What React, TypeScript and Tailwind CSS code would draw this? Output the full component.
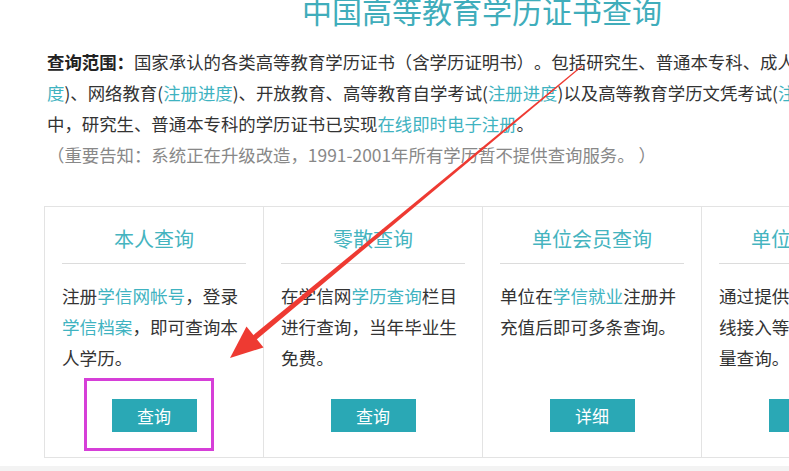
import React from "react";

type Piece = { t: string; link?: boolean };

interface CardProps {
  title: string;
  lines: Piece[][];
  button: string;
}

const cards: CardProps[] = [
  {
    title: "本人查询",
    lines: [
      [{ t: "注册" }, { t: "学信网帐号", link: true }, { t: "，登录" }],
      [{ t: "学信档案", link: true }, { t: "，即可查询本" }],
      [{ t: "人学历。" }],
    ],
    button: "查询",
  },
  {
    title: "零散查询",
    lines: [
      [{ t: "在学信网" }, { t: "学历查询", link: true }, { t: "栏目" }],
      [{ t: "进行查询，当年毕业生" }],
      [{ t: "免费。" }],
    ],
    button: "查询",
  },
  {
    title: "单位会员查询",
    lines: [
      [{ t: "单位在" }, { t: "学信就业", link: true }, { t: "注册并" }],
      [{ t: "充值后即可多条查询。" }],
    ],
    button: "详细",
  },
  {
    title: "单位批量查询",
    lines: [
      [{ t: "通过提供数据文件或在" }],
      [{ t: "线接入等方式进行批" }],
      [{ t: "量查询。" }],
    ],
    button: "详细",
  },
];

function Line({ parts }: { parts: Piece[] }) {
  return (
    <div className="whitespace-nowrap">
      {parts.map((p, i) =>
        p.link ? (
          <span key={i} className="text-[#3fb3c1]">
            {p.t}
          </span>
        ) : (
          <span key={i}>{p.t}</span>
        )
      )}
    </div>
  );
}

function QueryCard({ title, lines, button }: CardProps) {
  return (
    <div className="flex h-full w-[219px] shrink-0 flex-col border-r border-[#e3e3e3] px-[17px] pb-[25px]">
      <div className="mt-[18px] text-center text-[20px] leading-[28px] text-[#45b4bf]">
        {title}
      </div>
      <div className="mt-[10px] border-t border-[#dcdcdc]" />
      <div className="mt-[16px] text-[17.6px] leading-[31px] text-[#333]">
        {lines.map((l, i) => (
          <Line key={i} parts={l} />
        ))}
      </div>
      <div className="mt-auto flex justify-center">
        <button className="h-[33px] w-[85px] bg-[#2aa8b5] text-[17px] text-white">
          {button}
        </button>
      </div>
    </div>
  );
}

export default function App() {
  return (
    <div className="relative h-[471px] w-[789px] overflow-hidden bg-white font-['Noto_Sans_CJK_SC',sans-serif] [text-spacing-trim:space-all]">
      <div className="ml-[44px] w-[876px]">
        <h1 className="-mt-[5px] text-center text-[30px] leading-[30px] text-[#40adbb]">
          中国高等教育学历证书查询
        </h1>

        <div className="mt-[21px] ml-[3px] text-[17.4px] leading-[31px] text-[#333]">
          <div className="whitespace-nowrap">
            <span className="font-bold text-[#222]">查询范围：</span>
            国家承认的各类高等教育学历证书（含学历证明书）。包括研究生、普通本专科、成人本专科(
            <span className="text-[#3fb3c1]">注册进</span>
          </div>
          <div className="whitespace-nowrap">
            <span className="text-[#3fb3c1]">度</span>)、网络教育(
            <span className="text-[#3fb3c1]">注册进度</span>)、开放教育、高等教育自学考试(
            <span className="text-[#3fb3c1]">注册进度</span>)以及高等教育学历文凭考试(
            <span className="text-[#3fb3c1]">注册进度</span>)等。其
          </div>
          <div className="whitespace-nowrap">
            中，研究生、普通本专科的学历证书已实现
            <span className="text-[#3fb3c1]">在线即时电子注册</span>。
          </div>
          <div className="whitespace-nowrap text-[#888]">
            （重要告知：系统正在升级改造，1991-2001年所有学历暂不提供查询服务。 ）
          </div>
        </div>

        <div className="mt-[36px] flex h-[252px] border border-r-0 border-[#e3e3e3]">
          {cards.map((c) => (
            <QueryCard key={c.title} {...c} />
          ))}
        </div>
      </div>

      <div className="mt-[8px] h-[10px] bg-[#f3f3f3]" />

      {/* annotation: highlight box */}
      <div className="pointer-events-none absolute left-[84px] top-[378px] h-[73px] w-[130px] border-[3px] border-[#d63fd8]" />

      {/* annotation: red arrow */}
      <svg
        className="pointer-events-none absolute left-0 top-0"
        width="789"
        height="471"
        viewBox="0 0 789 471"
      >
        <polygon
          points="582.3,66.4 581.7,65.6 252.9,335.5 256.3,339.7"
          fill="#ee3a32"
        />
        <polygon
          points="230,358 263.5,347.5 246.5,326.5"
          fill="#ee3a32"
        />
      </svg>
    </div>
  );
}
